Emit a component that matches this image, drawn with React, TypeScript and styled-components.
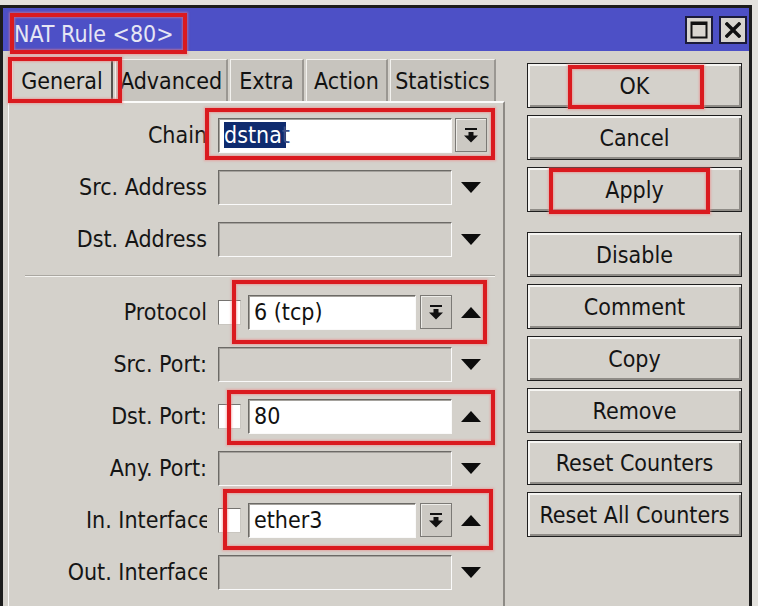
import React from "react";
import styled, { createGlobalStyle } from "styled-components";

const FONT = `"DejaVu Sans Condensed", "DejaVu Sans", sans-serif`;

const GlobalStyle = createGlobalStyle`
  html, body {
    margin: 0;
    padding: 0;
    background: #e3e1dd;
    font-family: ${FONT};
    font-stretch: condensed;
  }
`;

const Page = styled.div`
  width: 758px;
  height: 606px;
  overflow: hidden;
  padding-top: 5px;
  box-sizing: border-box;
`;

const Window = styled.div`
  width: 752px;
  height: 601px;
  box-sizing: border-box;
  border: 3px solid #1c1c1c;
  border-bottom: none;
  background: #d4d1cb;
  display: flex;
  flex-direction: column;
`;

const TitleBar = styled.div`
  position: relative;
  height: 43px;
  flex-shrink: 0;
  background: #4d50c6;
  display: flex;
  align-items: center;
  padding: 0 2px 0 11px;
`;

const TitleText = styled.span`
  color: #e6e6f4;
  font-size: 23px;
  padding-top: 8px;
`;

const Controls = styled.div`
  margin-left: auto;
  display: flex;
  gap: 6px;
`;

const CtlButton = styled.div`
  width: 28px;
  height: 28px;
  box-sizing: border-box;
  border: 2px solid #1b1b3a;
  background: #d8d5cf;
  display: flex;
  align-items: center;
  justify-content: center;
`;

const Mark = styled.div<{ $l: number; $t: number; $w: number; $h: number }>`
  position: absolute;
  left: ${(p) => p.$l}px;
  top: ${(p) => p.$t}px;
  width: ${(p) => p.$w}px;
  height: ${(p) => p.$h}px;
  box-sizing: border-box;
  border: 4px solid #da1a1f;
  box-shadow: 0 0 2px 1px rgba(240, 130, 130, 0.55), inset 0 0 2px 1px rgba(240, 130, 130, 0.55);
  pointer-events: none;
  z-index: 2;
`;

const Body = styled.div`
  flex: 1;
  display: flex;
  padding-top: 8px;
  min-height: 0;
`;

const LeftCol = styled.div`
  width: 502px;
  display: flex;
  flex-direction: column;
`;

const Tabs = styled.div`
  display: flex;
  gap: 2px;
  padding-left: 9px;
  height: 42px;
`;

const Tab = styled.div<{ $w: number; $active?: boolean }>`
  position: relative;
  width: ${(p) => p.$w}px;
  box-sizing: border-box;
  background: ${(p) => (p.$active ? "#d4d1cb" : "#c7c4be")};
  border-top: 1px solid #f2f1ee;
  border-left: 1px solid #f2f1ee;
  border-right: 2px solid ${(p) => (p.$active ? "#55534f" : "#9a9792")};
  display: flex;
  align-items: center;
  justify-content: center;
  font-size: 23px;
  color: #111;
  white-space: nowrap;
`;

const Panel = styled.div`
  flex: 1;
  margin-left: 5px;
  border-top: 2px solid #fbfbfa;
  border-left: 1px solid #fbfbfa;
  border-right: 2px solid #8d8a85;
  padding-top: 6px;
`;

const Row = styled.div`
  position: relative;
  height: 52px;
  display: flex;
  align-items: center;
`;

const LabelClip = styled.div`
  width: 198px;
  margin-right: 11px;
  overflow: hidden;
  display: flex;
  justify-content: flex-end;
  white-space: nowrap;
`;

const LabelText = styled.span<{ $over?: number }>`
  flex-shrink: 0;
  font-size: 23px;
  color: #151515;
  margin-right: ${(p) => -(p.$over ?? 0)}px;
`;

const FieldArea = styled.div`
  width: 234px;
  height: 35px;
  display: flex;
  align-items: center;
  gap: 4px;
`;

const Slot = styled.div`
  width: 38px;
  height: 35px;
  display: flex;
  align-items: center;
  justify-content: center;
`;

const Input = styled.div<{ $enabled?: boolean }>`
  flex: 1;
  height: 35px;
  box-sizing: border-box;
  background: ${(p) => (p.$enabled ? "#ffffff" : "#d2cfc9")};
  border-style: solid;
  border-width: 1px;
  border-color: #6c6a66 #fafafa #fafafa #6c6a66;
  box-shadow: inset 1px 1px 0 #a5a29d;
  display: flex;
  align-items: center;
  padding-left: 5px;
  font-size: 23px;
  color: #111;
  white-space: nowrap;
  overflow: hidden;
`;

const Check = styled.div`
  width: 23px;
  height: 25px;
  box-sizing: border-box;
  margin-right: 3px;
  background: #fff;
  border: 1px solid #757370;
  border-bottom-color: #c9c6c0;
  border-right-color: #c9c6c0;
  flex-shrink: 0;
`;

const DropBtn = styled.div`
  width: 32px;
  height: 34px;
  box-sizing: border-box;
  background: #ccc9c3;
  border: 1px solid #7b7975;
  box-shadow: inset 1px 1px 0 #eeede9;
  display: flex;
  align-items: center;
  justify-content: center;
  flex-shrink: 0;
`;

const Sel = styled.span`
  background: #0f2b6e;
  color: #fff;
`;

const Tail = styled.span`
  background: linear-gradient(to right, #0f2b6e 50%, transparent 50%);
  color: #3d4f86;
`;

const Separator = styled.div`
  margin: 10px 8px 9px 16px;
  height: 1px;
  background: #aaa7a1;
  border-bottom: 1px solid #f4f3f0;
`;

const RightCol = styled.div`
  margin-left: 22px;
  width: 215px;
  padding-top: 4px;
  display: flex;
  flex-direction: column;
  gap: 7px;
`;

const Button = styled.div<{ $gapBefore?: number }>`
  position: relative;
  height: 45px;
  box-sizing: border-box;
  margin-top: ${(p) => p.$gapBefore ?? 0}px;
  border: 1px solid #1e1e1e;
  background: #d4d1cb;
  box-shadow: inset 2px 2px 0 #f6f5f2, inset -2px -2px 0 #8f8c87;
  display: flex;
  align-items: center;
  justify-content: center;
  font-size: 23px;
  color: #141414;
  white-space: nowrap;
`;

const DownArrow = () => (
  <svg width="20" height="11" viewBox="0 0 20 11">
    <polygon points="0,0 20,0 10,11" fill="#0c0c0c" />
  </svg>
);

const UpArrow = () => (
  <svg width="20" height="11" viewBox="0 0 20 11">
    <polygon points="0,11 20,11 10,0" fill="#0c0c0c" />
  </svg>
);

const DropIcon = () => (
  <svg width="14" height="15" viewBox="0 0 14 15">
    <rect x="1" y="0" width="12" height="2" fill="#111" />
    <rect x="4.5" y="4" width="5" height="4" fill="#111" />
    <polygon points="0,7.5 14,7.5 7,14.5" fill="#111" />
  </svg>
);

const MaxIcon = () => (
  <svg width="18" height="18" viewBox="0 0 18 18">
    <rect x="1.5" y="1.5" width="15" height="15" fill="none" stroke="#111" strokeWidth="2" />
    <rect x="1.5" y="1.5" width="15" height="2.5" fill="#111" />
  </svg>
);

const CloseIcon = () => (
  <svg width="16" height="16" viewBox="0 0 16 16">
    <path d="M2 2 L14 14 M14 2 L2 14" stroke="#111" strokeWidth="3.4" strokeLinecap="square" />
  </svg>
);

function Field({
  label,
  over,
  check,
  enabled,
  drop,
  value,
  slot,
  children,
}: {
  label: string;
  over?: number;
  check?: boolean;
  enabled?: boolean;
  drop?: boolean;
  value?: React.ReactNode;
  slot?: "down" | "up" | "drop";
  children?: React.ReactNode;
}) {
  return (
    <Row>
      <LabelClip>
        <LabelText $over={over}>{label}</LabelText>
      </LabelClip>
      <FieldArea>
        {check && <Check />}
        <Input $enabled={enabled}>{value}</Input>
        {drop && (
          <DropBtn>
            <DropIcon />
          </DropBtn>
        )}
      </FieldArea>
      <Slot>
        {slot === "down" && <DownArrow />}
        {slot === "up" && <UpArrow />}
        {slot === "drop" && (
          <DropBtn>
            <DropIcon />
          </DropBtn>
        )}
      </Slot>
      {children}
    </Row>
  );
}

export default function App() {
  return (
    <Page>
      <GlobalStyle />
      <Window>
        <TitleBar>
          <TitleText>NAT Rule &lt;80&gt;</TitleText>
          <Controls>
            <CtlButton>
              <MaxIcon />
            </CtlButton>
            <CtlButton>
              <CloseIcon />
            </CtlButton>
          </Controls>
          <Mark $l={7} $t={5} $w={177} $h={41} />
        </TitleBar>
        <Body>
          <LeftCol>
            <Tabs>
              <Tab $w={101} $active>
                General
                <Mark $l={-5} $t={-3} $w={114} $h={46} />
              </Tab>
              <Tab $w={113}>Advanced</Tab>
              <Tab $w={74}>Extra</Tab>
              <Tab $w={82}>Action</Tab>
              <Tab $w={106}>Statistics</Tab>
            </Tabs>
            <Panel>
              <Field
                label="Chain"
                enabled
                slot="drop"
                value={
                  <>
                    <Sel>dstna</Sel>
                    <Tail>t</Tail>
                  </>
                }
              >
                <Mark $l={196} $t={-1} $w={290} $h={52} />
              </Field>
              <Field label="Src. Address" slot="down" />
              <Field label="Dst. Address" slot="down" />
              <Separator />
              <Field label="Protocol" check enabled drop value="6 (tcp)" slot="up">
                <Mark $l={223} $t={-6} $w={255} $h={64} />
              </Field>
              <Field label="Src. Port:" slot="down" />
              <Field label="Dst. Port:" check enabled value="80" slot="up">
                <Mark $l={218} $t={0} $w={268} $h={55} />
              </Field>
              <Field label="Any. Port:" slot="down" />
              <Field label="In. Interface" over={4} check enabled drop value="ether3" slot="up">
                <Mark $l={214} $t={-5} $w={270} $h={61} />
              </Field>
              <Field label="Out. Interface" over={4} slot="down" />
            </Panel>
          </LeftCol>
          <RightCol>
            <Button>
              OK
              <Mark $l={40} $t={1} $w={136} $h={44} />
            </Button>
            <Button>Cancel</Button>
            <Button>
              Apply
              <Mark $l={21} $t={0} $w={161} $h={46} />
            </Button>
            <Button $gapBefore={13}>Disable</Button>
            <Button>Comment</Button>
            <Button>Copy</Button>
            <Button>Remove</Button>
            <Button>Reset Counters</Button>
            <Button>Reset All Counters</Button>
          </RightCol>
        </Body>
      </Window>
    </Page>
  );
}
